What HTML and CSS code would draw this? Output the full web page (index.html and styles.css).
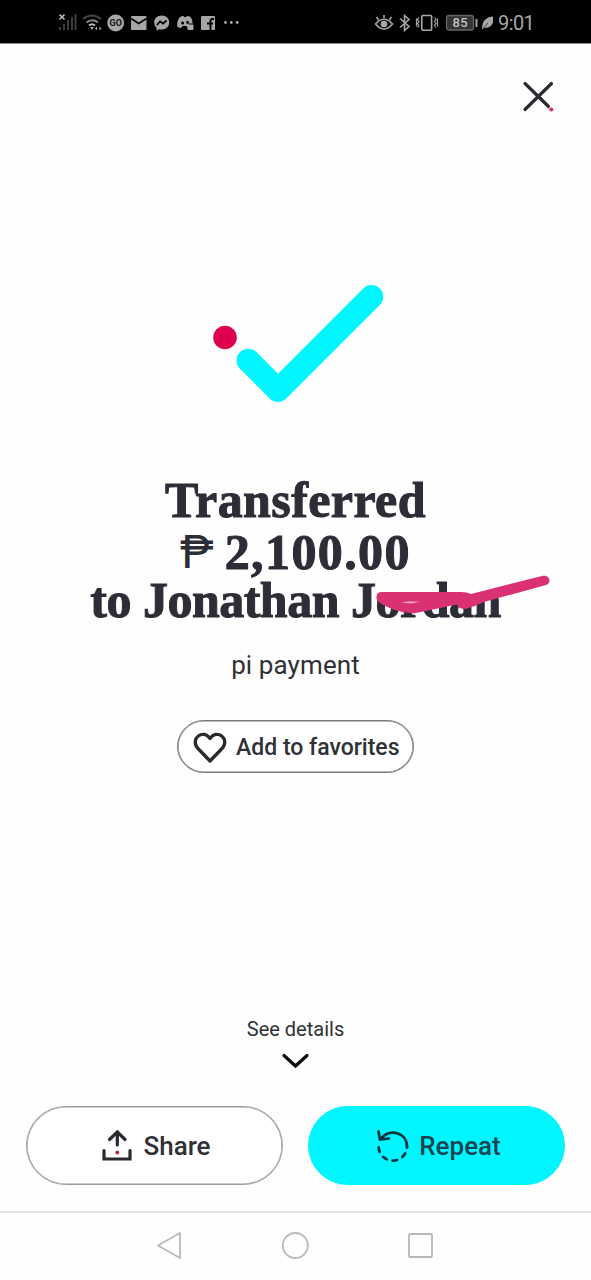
FILE: index.html
```html
<!DOCTYPE html>
<html lang="en">
<head>
<meta charset="utf-8">
<title>Transfer complete</title>
<link rel="stylesheet" href="styles.css">
</head>
<body>
<div class="screen">
  <header class="status">
    <svg class="status-left" width="190" height="24" viewBox="54 10 190 24">
      <g fill="#3c3c3c"><rect x="59" y="27" width="2" height="3"/><rect x="63" y="24" width="2" height="6"/><rect x="67" y="20" width="2" height="10"/><rect x="71" y="17" width="2" height="13"/><rect x="74.5" y="14" width="2" height="16"/></g>
      <path d="M59.500 14.500l5 5m0-5l-5 5" stroke="#bbb" stroke-width="1.700"/>
      <g fill="none" stroke-width="2"><path d="M83 19Q92 12 101 19" stroke="#444"/><path d="M86.500 22.500Q92 18 98 22.500" stroke="#888"/><path d="M89 25.500Q92 23 95 25.500" stroke="#bbb"/></g>
      <path d="M90 27h4l-2 3zM95 28.500l2-2v4zM101.500 28.500l-2-2v4z" fill="#aaa"/>
      <circle cx="115.700" cy="23" r="8.400" fill="#a6a6a6"/>
      <text x="115.700" y="26.300" class="go" text-anchor="middle">GO</text>
      <rect x="131" y="16" width="15.500" height="14" rx="1" fill="#a6a6a6"/><path d="M131 18.500l7.700 5 7.800-5" fill="none" stroke="#000" stroke-width="1.500"/>
      <path d="M161.700 15.500c-4.500 0-7.500 3-7.500 7 0 2.200.9 3.900 2.400 5.200v3l2.600-1.500c.8.200 1.600.3 2.500.3 4.500 0 7.500-3 7.500-7s-3-7-7.500-7z" fill="#a6a6a6"/><path d="M156.800 25l3.400-3.500 2.800 2 3.600-3" fill="none" stroke="#000" stroke-width="1.800"/>
      <path d="M180 17q2-1.200 3.500-1l.7 1h2l.7-1q2 0 3.700 1 2 3 2.100 6.500h-4v4h-1.200l-1-1.400h-4l-1.500 2.200q-2.500-.5-4-2 0-6 3-9.300z" fill="#a6a6a6"/><circle cx="182.600" cy="23" r="1.500" fill="#000"/><circle cx="187.600" cy="22.500" r="1.400" fill="#000"/><rect x="187.500" y="24.500" width="6" height="5.500" rx="1" fill="#aaa"/>
      <rect x="201" y="16" width="14" height="14" rx="1" fill="#a6a6a6"/><path d="M214 19h-1.500q-2 0-2 2V30M207 23.500h6" stroke="#000" stroke-width="2" fill="none"/>
      <g fill="#aaa"><circle cx="225.500" cy="22.500" r="1.400"/><circle cx="231.300" cy="22.500" r="1.400"/><circle cx="237.200" cy="22.500" r="1.400"/></g>
    </svg>
    <svg class="status-right" width="120" height="24" viewBox="373 10 120 24">
      <g fill="none" stroke="#a6a6a6" stroke-width="1.600">
        <path d="M375.500 24Q384 14.500 392.500 24 384 34 375.500 24zM384 18v-3M378.500 20l-2-3M389.500 20l2-3"/>
        <path d="M400 18.500l9 8-4.500 4V15.500l4.500 4-9 8"/>
        <rect x="421.800" y="15.500" width="9.800" height="14.800" rx="1"/>
        <path d="M419 17.500l-1.500 2 1.500 2-1.500 2 1.500 2-1.500 2M434.500 17.500l1.500 2-1.500 2 1.500 2-1.500 2 1.500 2M416.500 18.500v8M437.500 18.500v8" stroke-width="1.200"/>
      </g>
      <circle cx="384" cy="24" r="3.300" fill="#aaa"/>
      <rect x="446.500" y="15.500" width="27" height="14.500" rx="2.500" fill="#343434" stroke="#666" stroke-width="1.300"/><rect x="475.500" y="19" width="2" height="8" fill="#a0a0a0"/>
      <text x="460.300" y="27.300" class="battery" text-anchor="middle">85</text>
      <path d="M482 29.500q-1-12 12-13.500 0 12-10 12z" fill="#a6a6a6"/><path d="M483 28.500l5-5.500" stroke="#000" stroke-width=".7"/>
    </svg>
    <span class="clock">9:01</span>
  </header>

  <main class="content">
    <div class="close">
      <svg width="34" height="34" viewBox="521 80 34 34"><path d="M525 83.500L548.500 106.500M551.500 83.500L525 109.500" stroke="#292a2f" stroke-width="3.200" stroke-linecap="round"/><circle cx="551.300" cy="109.600" r="2" fill="#d42a5c"/></svg>
    </div>
    <svg class="check" width="180" height="124" viewBox="208 282 180 124"><path d="M248.300 360.500l29.700 29.800 93.500-93.500" fill="none" stroke="#00f6ff" stroke-width="23.500" stroke-linecap="round" stroke-linejoin="round"/><circle cx="225" cy="337.500" r="11.800" fill="#dc004f"/></svg>
    <h1 class="title">
      <span class="line first">Transferred</span>
      <span class="line amount"><span class="peso">₱</span><span>2,100.00</span></span>
      <span class="line name">to Jonathan Jordan
        <svg class="scribble" width="180" height="44" viewBox="373 572 180 44"><path d="M381 592H461Q467 592 471 594L542 576C550 574 552 583 546 585L484 602Q474 607 465 609Q459 609 457 604.500L416 613Q406 614 395 610Q381 605 377 600Q375 593 381 592Z" fill="#d93174"/><path d="M401 602.500l8-1.300 12 .6-10 1.800z" fill="#eba3bf"/></svg>
      </span>
    </h1>
    <p class="note">pi payment</p>
    <button class="favorite">
      <svg width="36" height="34" viewBox="192 729.500 36 34"><path d="M210 759.500L197.500 746.500C190 737 203 727 210 737 217 727 230 737 222.500 746.500Z" fill="none" stroke="#292a2f" stroke-width="3.300" stroke-linejoin="round"/></svg>
      <span>Add to favorites</span>
    </button>
    <div class="details">
      <span>See details</span>
      <svg width="32" height="20" viewBox="280 1050 32 20"><path d="M284 1055.500l11.500 10.500 11.500-10.500" fill="none" stroke="#08080a" stroke-width="3.200" stroke-linecap="round"/></svg>
    </div>
    <div class="actions">
      <button class="action share">
        <svg width="32" height="34" viewBox="101 1129 32 34"><path d="M104 1150.500v8.500h26v-8.500M117.300 1145v-12M109.500 1139.500l7.800-7.500 7.800 7.500" fill="none" stroke="#292a2f" stroke-width="3.200" stroke-linecap="round"/><circle cx="117.300" cy="1152.500" r="2" fill="#b52b57"/></svg>
        <span>Share</span>
      </button>
      <button class="action repeat">
        <svg width="34" height="34" viewBox="375 1128 34 34"><g fill="none" stroke="#06343d" stroke-width="2.700" stroke-linecap="round"><path d="M381 1137.500C391 1127 407 1132 407 1145.500M378.500 1130.500l1.500 8 9-1"/><path d="M378.600 1145.500A14.200 14.200 0 0 0 407 1145.500" stroke-dasharray="4.500 6" stroke-dashoffset="-1"/></g></svg>
        <span>Repeat</span>
      </button>
    </div>
  </main>

  <nav class="nav">
    <svg width="28" height="30" viewBox="156 1230 28 30"><path d="M180 1233v25l-22-12.500z" class="outline"/></svg>
    <svg width="30" height="30" viewBox="280 1230 30 30"><circle cx="295.300" cy="1245.500" r="12.500" class="outline"/></svg>
    <svg width="28" height="30" viewBox="406 1230 28 30"><rect x="409" y="1234" width="23" height="23" rx="1" class="outline"/></svg>
  </nav>
</div>
</body>
</html>
```
FILE: styles.css
```css
* { box-sizing: border-box; }
body { margin: 0; background: #fff; font-family: Roboto, sans-serif; color: #303136; }
svg { display: block; flex: none; }
button { font: inherit; color: inherit; margin: 0; padding: 0; background: #fff; }
.screen { width: 591px; height: 1280px; display: flex; flex-direction: column; overflow: hidden; background: #fefefe; }
.status { height: 44px; background: #000; display: flex; align-items: center; padding-left: 54px; border-bottom: 1px solid #888; }
.status-right { margin-left: 129px; }
.clock { margin-left: 5px; font-size: 20px; line-height: 24px; color: #a6a6a6; letter-spacing: -0.6px; padding-top: 2px; }
.go { font: bold 9px Roboto, sans-serif; fill: #111; }
.battery { font: 500 13px Roboto, sans-serif; fill: #c4c4c4; letter-spacing: .5px; }
.content { height: 1167px; display: flex; flex-direction: column; align-items: center; }
.close { align-self: flex-end; padding: 36px 36px 0 0; }
.check { margin-top: 168px; margin-left: 5px; }
.title { margin: 69px 0 0; width: 100%; font: bold 50px/50px "Liberation Serif", serif; color: #2c2d36; display: flex; flex-direction: column; align-items: center; -webkit-text-stroke: 1px #2c2d36; }
.line { display: block; height: 50px; white-space: nowrap; }
.first { letter-spacing: .4px; }
.amount { display: flex; height: 50px; gap: 11px; padding-top: 2px; letter-spacing: 1.4px; }
.peso { font-family: Roboto, sans-serif; font-weight: 400; font-size: 46px; letter-spacing: 0; -webkit-text-stroke: 0; }
.name { position: relative; letter-spacing: -.5px; }
.scribble { position: absolute; left: 283px; top: -3px; }
.note { margin: 24px 0 0; font-size: 26px; line-height: 32px; letter-spacing: .1px; }
.favorite { margin-top: 39px; width: 237px; height: 53px; border: 1px solid #77777b; box-shadow: inset 0 0 0 .6px #77777b; border-radius: 27px; display: flex; align-items: center; padding: 2px 0 0 14px; gap: 8px; font-size: 23px; font-weight: 500; white-space: nowrap; }
.details { margin-top: 243px; display: flex; flex-direction: column; align-items: center; font-size: 20px; line-height: 26px; gap: 8px; }
.actions { margin-top: 36px; width: 539px; display: flex; justify-content: space-between; }
.action { width: 257px; height: 79px; border-radius: 40px; border: 1px solid #9b9b9d; box-shadow: inset 0 0 0 .6px #9b9b9d; display: flex; align-items: center; justify-content: center; gap: 10px; padding-left: 3px; font-size: 26px; font-weight: 500; }
.repeat { background: #00f6ff; border-color: #00f6ff; box-shadow: none; color: #14454f; }
.nav { flex: 1; border-top: 2px solid #e5e5e5; display: flex; align-items: center; justify-content: space-between; padding: 0 157px 3px 156px; }
.outline { fill: none; stroke: #b9b9b9; stroke-width: 1.8; stroke-linejoin: round; }
```
